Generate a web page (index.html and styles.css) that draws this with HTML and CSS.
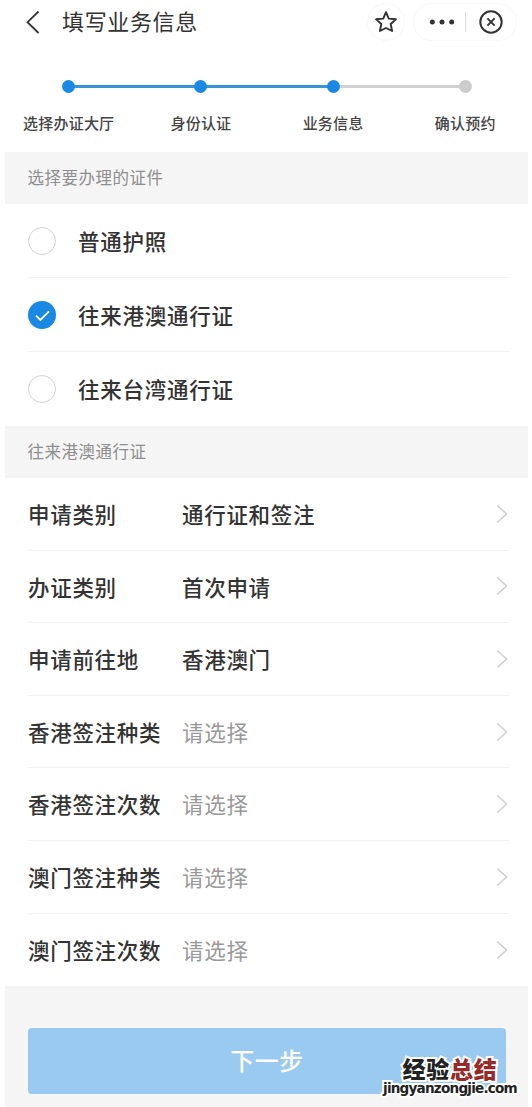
FILE: index.html
```html
<!DOCTYPE html>
<html lang="zh-CN">
<head>
<meta charset="utf-8">
<title>填写业务信息</title>
<link rel="stylesheet" href="styles.css">
</head>
<body>
<div class="page">
  <header class="navbar">
    <svg class="back" width="16" height="26" viewBox="0 0 16 26"><path d="M13.5 2.5 2.5 13.2 13.5 24"/></svg>
    <h1 class="title">填写业务信息</h1>
    <div class="round">
      <svg class="star" width="24" height="24" viewBox="0 0 24 24"><path d="M12 2.2 14.8 8.6 21.9 9.3 16.7 14 18.1 21 12 18 5.9 21 7.3 14 2.1 9.3 9.2 8.6Z"/></svg>
    </div>
    <div class="capsule">
      <svg class="dots" width="28" height="8" viewBox="0 0 28 8"><circle cx="4.3" cy="4" r="2.5"/><circle cx="14" cy="4" r="2.5"/><circle cx="23.7" cy="4" r="2.5"/></svg>
      <span class="bar"></span>
      <svg class="close" width="26" height="26" viewBox="0 0 26 26"><circle cx="13" cy="13" r="10.7"/><path d="M9.4 9.4 16.6 16.6M16.6 9.4 9.4 16.6"/></svg>
    </div>
  </header>

  <ol class="steps">
    <li class="step done"><i class="dot"></i><span>选择办证大厅</span></li>
    <li class="step done"><i class="dot"></i><span>身份认证</span></li>
    <li class="step"><i class="dot"></i><span>业务信息</span></li>
    <li class="step todo"><i class="dot"></i><span>确认预约</span></li>
  </ol>

  <h2 class="section">选择要办理的证件</h2>
  <ul class="options">
    <li class="option"><i class="radio"></i><span>普通护照</span></li>
    <li class="option"><i class="radio checked"><svg width="28" height="28" viewBox="0 0 28 28"><path d="M8 14.7 12.4 19 21 10.3"/></svg></i><span>往来港澳通行证</span></li>
    <li class="option"><i class="radio"></i><span>往来台湾通行证</span></li>
  </ul>

  <h2 class="section">往来港澳通行证</h2>
  <ul class="fields">
    <li class="field"><span class="label">申请类别</span><span class="value">通行证和签注</span><svg class="arrow" width="14" height="22" viewBox="0 0 14 22"><path d="M2.3 2.5 11.5 11 2.3 19.5"/></svg></li>
    <li class="field"><span class="label">办证类别</span><span class="value">首次申请</span><svg class="arrow" width="14" height="22" viewBox="0 0 14 22"><path d="M2.3 2.5 11.5 11 2.3 19.5"/></svg></li>
    <li class="field"><span class="label">申请前往地</span><span class="value">香港澳门</span><svg class="arrow" width="14" height="22" viewBox="0 0 14 22"><path d="M2.3 2.5 11.5 11 2.3 19.5"/></svg></li>
    <li class="field"><span class="label">香港签注种类</span><span class="value empty">请选择</span><svg class="arrow" width="14" height="22" viewBox="0 0 14 22"><path d="M2.3 2.5 11.5 11 2.3 19.5"/></svg></li>
    <li class="field"><span class="label">香港签注次数</span><span class="value empty">请选择</span><svg class="arrow" width="14" height="22" viewBox="0 0 14 22"><path d="M2.3 2.5 11.5 11 2.3 19.5"/></svg></li>
    <li class="field"><span class="label">澳门签注种类</span><span class="value empty">请选择</span><svg class="arrow" width="14" height="22" viewBox="0 0 14 22"><path d="M2.3 2.5 11.5 11 2.3 19.5"/></svg></li>
    <li class="field"><span class="label">澳门签注次数</span><span class="value empty">请选择</span><svg class="arrow" width="14" height="22" viewBox="0 0 14 22"><path d="M2.3 2.5 11.5 11 2.3 19.5"/></svg></li>
  </ul>

  <footer class="footer">
    <button class="next">下一步</button>
  </footer>

  <div class="watermark">
    <div class="brand">经验<span class="red">总结</span></div>
    <div class="site">jingyanzongjie.com</div>
  </div>
</div>
</body>
</html>
```

FILE: styles.css
```css
* { box-sizing: border-box; margin: 0; padding: 0; }
body {
  background: #fff;
  color: #333;
  font-family: "Noto Sans CJK SC", sans-serif;
  overflow: hidden;
}
ul, ol { list-style: none; }
svg { display: block; fill: none; flex: none; }
.page { position: relative; width: 532px; height: 1107px; padding: 0 4px 0 5px; overflow: hidden; }

.navbar { height: 43px; display: flex; align-items: center; padding: 0 11px 0 20px; }
.back { stroke: #333; stroke-width: 1.8; }
.title { margin-left: 21px; flex: 1; font-size: 22px; font-weight: 400; letter-spacing: .65px; line-height: 42px; margin-top: -3px; }
.round { width: 38px; height: 38px; border: 1px solid #f8f8f8; border-radius: 50%; display: grid; place-items: center; margin-right: 8px; }
.star { stroke: #333; stroke-width: 1.9; stroke-linejoin: round; }
.capsule { width: 104px; height: 38px; border: 1px solid #f8f8f8; border-radius: 19px; display: flex; align-items: center; padding-left: 14px; }
.dots { fill: #333; }
.bar { width: 1px; height: 20px; background: #ddd; margin: 0 12px 0 9px; }
.close { stroke: #333; stroke-width: 2; }

.steps { height: 109px; display: grid; grid-template-columns: repeat(4, 132.2px); margin-left: -2.4px; padding-top: 37px; }
.step { position: relative; display: flex; flex-direction: column; align-items: center; font-size: 15px; letter-spacing: .2px; font-weight: 500; color: #444; }
.step span { line-height: 22px; margin-top: 19px; white-space: nowrap; }
.dot { width: 13px; height: 13px; border-radius: 50%; background: #1989e4; position: relative; z-index: 1; }
.todo .dot { background: #ccc; }
.step:not(:last-child)::after { content: ""; position: absolute; left: 50%; top: 5px; width: 100%; height: 3px; background: #d0d0d0; }
.step.done::after { background: #3a94d6; }

.section { height: 52px; line-height: 51px; background: #f5f5f5; padding-left: 22.6px; font-size: 16.5px; letter-spacing: .5px; font-weight: 400; color: #8e8e8e; }
.options { height: 222px; display: grid; grid-template-rows: repeat(3, 74px); padding: 0 18px 0 23px; }
.option { display: flex; align-items: center; gap: 22px; font-size: 21.5px; letter-spacing: .75px; font-weight: 500; border-bottom: 1px solid #f3f3f3; }
.option span { padding-bottom: 1px; }
.option:last-child, .field:last-child { border-bottom: 0; }
.radio { width: 28px; height: 28px; border: 1.5px solid #d3d3d3; border-radius: 50%; }
.radio.checked { border: 0; background: #1989e4; }
.radio path { stroke: #fff; stroke-width: 1.8; }

.fields { height: 508px; display: grid; grid-template-rows: repeat(7, 72.6px); padding: 0 19px 0 23px; }
.field { display: flex; align-items: center; font-size: 21.5px; letter-spacing: .7px; font-weight: 500; border-bottom: 1px solid #f3f3f3; }
.label { width: 154px; }
.label, .value { padding-bottom: .6px; }
.value { flex: 1; }
.empty { color: #999; font-weight: 400; }
.arrow { stroke: #d0d0d0; stroke-width: 1.6; }

.footer { height: 121px; background: #f5f5f5; padding: 42px 22px 0 23px; }
.next { display: block; width: 100%; height: 66px; border: 0; border-radius: 4px; background: #9bcaf0; color: #fff; font: 500 24px "Noto Sans CJK SC", sans-serif; letter-spacing: .5px; padding-bottom: 3px; }

.watermark { position: absolute; left: 382px; top: 1056px; width: 136px; color: #222; text-align: center; paint-order: stroke fill; -webkit-text-stroke: 4px #fff; }
.brand { font-size: 23px; font-weight: 900; line-height: 25px; letter-spacing: .8px; }
.red { color: #982b29; }
.site { font: 700 13.6px/15px "DejaVu Sans", sans-serif; white-space: nowrap; letter-spacing: -.8px; }
```
